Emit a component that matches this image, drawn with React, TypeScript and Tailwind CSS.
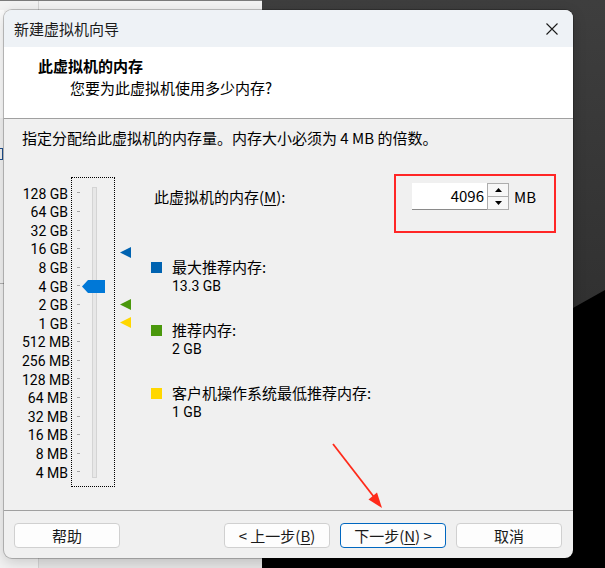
import React from "react";

const labels = [
  "128 GB",
  "64 GB",
  "32 GB",
  "16 GB",
  "8 GB",
  "4 GB",
  "2 GB",
  "1 GB",
  "512 MB",
  "256 MB",
  "128 MB",
  "64 MB",
  "32 MB",
  "16 MB",
  "8 MB",
  "4 MB",
];

function Marker({ color, top }: { color: string; top: string }) {
  return (
    <svg className={`absolute left-0 ${top}`} width="11" height="11" viewBox="0 0 11 11">
      <polygon points="0,5.5 11,0 11,11" fill={color} />
    </svg>
  );
}

function Legend({ color, title, value }: { color: string; title: string; value: string }) {
  return (
    <div className="flex items-start h-[63px]">
      <div className={`w-[11px] h-[11px] mt-[4.3px] ${color}`} />
      <div className="ml-[10px]">
        <div className="text-[15px] leading-[18.6px]">{title}</div>
        <div className="mt-[0.6px] font-['Roboto',sans-serif] text-[14px] leading-[18px]">{value}</div>
      </div>
    </div>
  );
}

function Btn({ children, primary }: { children: React.ReactNode; primary?: boolean }) {
  return (
    <div
      className={`w-[106px] h-[25px] rounded-[4px] border ${
        primary ? "border-[#0067c0]" : "border-[#d0d0d0]"
      } bg-[#fdfdfd] text-[15px] leading-[23px] flex items-center justify-center text-[#1a1a1a]`}
    >
      {children}
    </div>
  );
}

export default function App() {
  return (
    <div className="relative w-[605px] h-[568px] overflow-hidden bg-[#f2f2f2] font-['Noto_Sans_CJK_SC',sans-serif] text-black">
      {/* backdrop */}
      <div className="absolute left-0 top-[10px] w-[4px] h-[108px] bg-[#fbfbfb]" />
      <div className="absolute left-0 top-[148px] w-[3px] h-[12px] border border-l-0 border-[#1f4e8c]" />
      <div className="absolute left-0 top-[283px] w-[4px] h-px bg-[#b0b0b0]" />
      <div className="absolute left-[38px] top-[558px] w-[224px] h-[10px] bg-[#e6e6e6]" />
      <div className="absolute left-[38px] top-0 w-px h-full bg-[#d4d4d4]" />
      <div className="absolute left-0 top-0 w-[262px] h-px bg-[#7a7a7a]" />
      <div className="absolute left-[262px] top-0 right-0 h-full bg-linear-to-b from-[#3e3e3e] to-[#262626]" />
      <div className="absolute left-[262px] top-0 right-0 h-full bg-black [clip-path:polygon(0_483px,100%_290px,100%_100%,0_100%)]" />

      {/* dialog */}
      <div className="absolute left-[4px] top-[10px] w-[569px] h-[548px] rounded-[8px] overflow-hidden flex flex-col bg-[#f0f0f0] shadow-[0_0_0_1px_rgba(0,0,0,0.22),0_4px_14px_rgba(0,0,0,0.18)]">
        {/* title bar */}
        <div className="h-[37px] shrink-0 bg-[#eef2f6] flex items-center justify-between pl-[10px] pr-[15px]">
          <span className="text-[15px] leading-[20px] text-[#1b1b1b]">新建虚拟机向导</span>
          <svg width="12" height="12" viewBox="0 0 12 12">
            <path d="M0.5 0.5 L11.5 11.5 M11.5 0.5 L0.5 11.5" stroke="#1b1b1b" strokeWidth="1.1" fill="none" />
          </svg>
        </div>

        {/* header */}
        <div className="h-[72px] shrink-0 bg-white border-b border-[#a0a0a0] pt-[8px]">
          <div className="pl-[34px] text-[15px] leading-[22px] font-bold">此虚拟机的内存</div>
          <div className="pl-[66px] text-[15px] leading-[22px]">您要为此虚拟机使用多少内存?</div>
        </div>

        {/* body */}
        <div className="h-[391px] shrink-0 pl-[18px] pt-[9px]">
          <p className="text-[15px] leading-[20px]">指定分配给此虚拟机的内存量。内存大小必须为 4 MB 的倍数。</p>

          <div className="flex items-start mt-[26px]">
            {/* labels */}
            <div className="mt-[3px] pt-[7.7px] w-[46px] text-right font-['Roboto',sans-serif] text-[14px]">
              {labels.map((l) => (
                <div key={l} className="h-[18.6px] leading-[18.6px] whitespace-nowrap">
                  {l}
                </div>
              ))}
            </div>

            {/* slider box */}
            <div className="relative ml-[3px] mt-[3px] w-[44px] h-[310px] border border-dotted border-black flex items-start">
              <div className="ml-[5px] pt-[5.7px] w-[3px]">
                {labels.map((l) => (
                  <div key={l} className="h-[18.6px] flex items-center">
                    <div className="w-[3px] h-px bg-[#a8a8a8]" />
                  </div>
                ))}
              </div>
              <div className="ml-[12px] mt-[9px] w-[5px] h-[291px] bg-[#e7e7e7] border border-[#d4d4d4]" />
              <svg className="absolute left-[10px] top-[102px]" width="23" height="13" viewBox="0 0 23 13">
                <polygon points="0,6.5 6,0 23,0 23,13 6,13" fill="#0078d7" />
              </svg>
            </div>

            {/* markers */}
            <div className="relative ml-[5px] mt-[3px] w-[11px] h-[310px]">
              <Marker color="#0063b1" top="top-[70px]" />
              <Marker color="#4a980c" top="top-[122px]" />
              <Marker color="#ffd700" top="top-[140px]" />
            </div>

            {/* right column */}
            <div className="relative ml-[20px] flex flex-col">
              <div className="flex items-center mt-[9px] h-[27px]">
                <div className="w-[261px] pl-[3px] text-[15px] leading-[20px]">
                  此虚拟机的内存(<span className="underline underline-offset-2">M</span>):
                </div>
                <div className="w-[75px] h-[27px] bg-white border-b border-[#8a8a8a] text-right pr-[3px] text-[15px] leading-[26px]">
                  4096
                </div>
                <div className="flex flex-col w-[22px] h-[27px]">
                  <div className="h-[14px] border border-[#adadad] bg-[#f7f7f7] flex items-center justify-center">
                    <svg width="7" height="4" viewBox="0 0 7 4">
                      <polygon points="0,4 3.5,0 7,4" fill="#000" />
                    </svg>
                  </div>
                  <div className="h-[13px] border border-t-0 border-[#adadad] bg-[#f7f7f7] flex items-center justify-center">
                    <svg width="7" height="4" viewBox="0 0 7 4">
                      <polygon points="0,0 7,0 3.5,4" fill="#000" />
                    </svg>
                  </div>
                </div>
                <span className="ml-[5px] text-[15px] leading-[20px]">MB</span>
              </div>
              <div className="absolute left-[243px] top-0 w-[162px] h-[59px] border-2 border-[#ff2626]" />

              <div className="mt-[47.7px] flex flex-col">
                <Legend color="bg-[#0063b1]" title="最大推荐内存:" value="13.3 GB" />
                <Legend color="bg-[#4a980c]" title="推荐内存:" value="2 GB" />
                <Legend color="bg-[#ffd700]" title="客户机操作系统最低推荐内存:" value="1 GB" />
              </div>
            </div>
          </div>
        </div>

        {/* footer */}
        <div className="h-[48px] shrink-0 border-t border-[#a0a0a0] flex items-start pt-[12px] pl-[10px] pr-[11px]">
          <Btn>帮助</Btn>
          <div className="ml-auto flex gap-[10px]">
            <Btn>
              &lt; 上一步(<span className="underline underline-offset-2">B</span>)
            </Btn>
            <Btn primary>
              下一步(<span className="underline underline-offset-2">N</span>) &gt;
            </Btn>
            <Btn>取消</Btn>
          </div>
        </div>
      </div>

      {/* annotation arrow */}
      <svg className="absolute left-0 top-0 pointer-events-none" width="605" height="568" viewBox="0 0 605 568">
        <line x1="333" y1="444" x2="374" y2="497" stroke="#ff2a1a" strokeWidth="1.8" />
        <polygon points="382,508 368.5,499.5 377,492.5" fill="#ff2a1a" />
      </svg>
    </div>
  );
}
